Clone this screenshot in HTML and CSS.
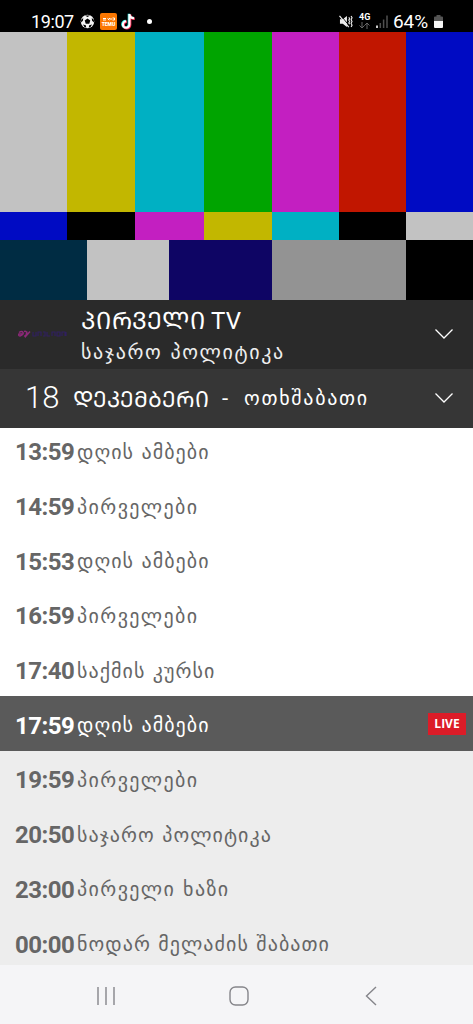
FILE: index.html
```html
<!DOCTYPE html>
<html lang="ka">
<head>
<meta charset="utf-8">
<title>პირველი TV</title>
<link rel="stylesheet" href="styles.css">
</head>
<body>
<div class="screen">
  <header class="status">
    <span class="clock">19:07</span>
    <svg class="ball" viewBox="0 0 16 16"><circle cx="8" cy="8" r="7.2" fill="#f4f4f4"/><g fill="#000"><path d="M8 4.800l3 2.200-1.100 3.500H6.100L5 7z"/><path d="M5.300 1.500h5.400L8 3.300zM1.200 6l2.300-1.800-.4 3L1.100 9zM14.800 6l-2.300-1.800.4 3L14.900 9zM3.200 11.300l3 .6.500 2.700-2.200-.9zM12.800 11.300l-3 .6-.5 2.700 2.200-.9z"/></g></svg>
    <span class="temu"><svg viewBox="0 0 17 17"><path d="M3 5.500h3M3 7h3M7.500 5.500l2 1.500M8 7l2-2M11 5v2M12.500 5h2v2h-2" stroke="#fff" stroke-width="1" fill="none"/></svg><b>TEMU</b></span>
    <svg class="tiktok" viewBox="0 0 16 18"><g fill="none" stroke-width="2.700"><path d="M9 1v11.200a3.500 3.500 0 1 1-3.500-3.500M9 1.500c.5 2.500 2.200 4 5 4" stroke="#25f4ee" transform="translate(-.5 -.3)"/><path d="M9 1v11.200a3.500 3.500 0 1 1-3.500-3.500M9 1.500c.5 2.500 2.200 4 5 4" stroke="#fe2c55" transform="translate(.7 .5)"/><path d="M9 1v11.200a3.500 3.500 0 1 1-3.500-3.500M9 1.500c.5 2.500 2.200 4 5 4" stroke="#fff" stroke-width="2.200"/></g></svg>
    <i class="dot"></i>
    <svg class="mute" viewBox="0 0 15 14"><path d="M1 4.500h3L8.500 1v12L4 9.500H1z" fill="#eee"/><path d="M1.500 0l9 11" stroke="#000" stroke-width="1"/><path d="M.5 1l10 12" stroke="#eee" stroke-width="1.300"/><path d="M10.500 2.500l1 1.500-1 1.500 1 1.500-1 1.500 1 1.500M13 1l1 2-1 2 1 2-1 2 1 2-1 2" stroke="#eee" stroke-width="1.200" fill="none"/></svg>
    <span class="net">4G<svg viewBox="0 0 11 7"><path d="M3 0v6M.5 3.500L3 6l2.500-2.500M8 7V1M5.500 3.500L8 1l2.500 2.500" fill="none" stroke="#666"/></svg></span>
    <svg class="signal" viewBox="0 0 12 13"><path d="M1 10.500V13" stroke="#fff" stroke-width="1.600"/><path d="M4.300 8v5M7.600 4.500V13M11 .5V13" stroke="#505050" stroke-width="1.500"/></svg>
    <span class="percent">64%</span>
    <svg class="battery" viewBox="0 0 9 13"><path d="M2.500 0h4v1.500H8a1 1 0 0 1 1 1V6H0V2.500a1 1 0 0 1 1-1h1.500z" fill="#555"/><path d="M0 6h9v6a1 1 0 0 1-1 1H1a1 1 0 0 1-1-1z" fill="#f5f5f5"/></svg>
  </header>

  <section class="video">
    <div class="bars tall"><i class="silver"></i><i class="yellow"></i><i class="cyan"></i><i class="green"></i><i class="magenta"></i><i class="red"></i><i class="blue"></i></div>
    <div class="bars short"><i class="blue"></i><i class="black"></i><i class="magenta"></i><i class="yellow"></i><i class="cyan"></i><i class="black"></i><i class="silver"></i></div>
    <div class="bars base"><i class="navy"></i><i class="silver"></i><i class="indigo"></i><i class="gray"></i><i class="black"></i></div>
  </section>

  <section class="channel">
    <svg class="logo" viewBox="0 0 50 8"><path d="M1 2.500q3-2 4 0T2 6q-2-.5-1-2h4M6 1.500q3-1 2.500 2T6 6M9 1.500L8 6l4-4.500" fill="none" stroke="#8c2878" stroke-width="1.500"/><path d="M15 2v4h3V2M20 6V2h3v4M25 2h2v4h-2M29 2v4h3M34 6V2h3v4M39 2h3v4h-3zM44 6V2h3v4M48 2v4" fill="none" stroke="#30205f" stroke-width="1.200"/></svg>
    <div class="names"><div class="title">ᲞᲘᲠᲕᲔᲚᲘ TV</div><div class="subtitle">საჯარო პოლიტიკა</div></div>
    <svg class="chevron" viewBox="0 0 20 12"><path d="M1.500 1.500L10 10l8.500-8.500"/></svg>
  </section>

  <section class="date">
    <span class="day">18</span><span class="month">ᲓᲔᲙᲔᲛᲑᲔᲠᲘ</span><span class="dash">-</span><span class="weekday">ოთხშაბათი</span>
    <svg class="chevron" viewBox="0 0 20 12"><path d="M1.500 1.500L10 10l8.500-8.500"/></svg>
  </section>

  <main class="list">
    <div class="row"><b>13:59</b><span>დღის ამბები</span></div>
    <div class="row"><b>14:59</b><span class="wide">პირველები</span></div>
    <div class="row"><b>15:53</b><span>დღის ამბები</span></div>
    <div class="row"><b>16:59</b><span class="wide">პირველები</span></div>
    <div class="row"><b>17:40</b><span>საქმის კურსი</span></div>
    <div class="row live"><b>17:59</b><span>დღის ამბები</span><em>LIVE</em></div>
    <div class="row next"><b>19:59</b><span class="wide">პირველები</span></div>
    <div class="row next"><b>20:50</b><span>საჯარო პოლიტიკა</span></div>
    <div class="row next"><b>23:00</b><span class="wide">პირველი ხაზი</span></div>
    <div class="row next"><b>00:00</b><span>ნოდარ მელაძის შაბათი</span></div>
  </main>

  <nav class="nav">
    <svg class="recent" viewBox="0 0 20 20"><path d="M2 1v18M10 1v18M18 1v18"/></svg>
    <svg class="home" viewBox="0 0 20 20"><rect x="1" y="1" width="18" height="18" rx="5.500"/></svg>
    <svg class="back" viewBox="0 0 12 20"><path d="M11 1L1.500 10l9.500 9"/></svg>
  </nav>
</div>
</body>
</html>
```
FILE: styles.css
```css
* { box-sizing: border-box; }
body { margin: 0; font-family: Roboto, "DejaVu Sans", sans-serif; }
svg { display: block; flex: none; }
.screen { width: 473px; height: 1024px; display: flex; flex-direction: column; overflow: hidden; }

.status { height: 32px; flex: none; background: #000; color: #fff; display: flex; align-items: center; padding: 10px 30px 0 31px; }
.clock { font-size: 18px; width: 42px; letter-spacing: -.4px; margin-right: 7px; }
.ball { width: 15px; height: 15px; margin-right: 5px; }
.temu { width: 17px; height: 17px; border-radius: 2px; background: #fb7701; color: #fff; display: flex; flex-direction: column; align-items: center; overflow: hidden; margin-right: 4px; }
.temu svg { width: 17px; height: 17px; margin-bottom: -9px; }
.temu b { font: 900 5px/6px Roboto, sans-serif; }
.tiktok { width: 15px; height: 17px; margin-right: 11px; }
.dot { width: 5px; height: 5px; border-radius: 50%; background: #fff; }
.mute { width: 14px; height: 13px; margin-left: auto; margin-right: 6px; }
.net { font: 700 9px/8px Roboto, sans-serif; width: 12px; margin-right: 5px; }
.net svg { width: 11px; height: 7px; margin-top: 1px; }
.signal { width: 12px; height: 13px; margin-right: 6px; }
.percent { font-size: 19px; width: 37px; letter-spacing: -.1px; margin-right: 3px; transform: translateX(-1px); }
.battery { width: 9px; height: 13px; }

.video { height: 267.500px; flex: none; display: flex; flex-direction: column; }
.bars { display: grid; }
.bars.tall, .bars.short { grid-template-columns: 66.500px 68.500px 69px 67.500px 67px 67.500px 67px; }
.bars.tall { height: 180px; }
.bars.short { height: 28px; }
.bars.base { flex: 1; grid-template-columns: 87px 82px 102.500px 134.500px 67px; }
.silver { background: #c2c2c2; }
.yellow { background: #c2b700; }
.cyan { background: #00b0c3; }
.green { background: #00a400; }
.magenta { background: #c31fc1; }
.red { background: #c11600; }
.blue { background: #000bc3; }
.black { background: #000; }
.navy { background: #002c43; }
.indigo { background: #0e0564; }
.gray { background: #939393; }

.channel { height: 69px; flex: none; background: #2a2a2a; color: #fff; display: flex; align-items: center; padding: 0 19px 0 18px; }
.logo { width: 50px; height: 8px; margin-right: 13px; }
.names { flex: 1; white-space: nowrap; padding-top: 4px; }
.title { font-size: 24px; line-height: 33px; letter-spacing: .25px; }
.subtitle { font-family: "DejaVu Sans", sans-serif; font-size: 20px; line-height: 29px; letter-spacing: 1.650px; color: #eee; }
.chevron { width: 20px; height: 12px; fill: none; stroke: #fff; stroke-width: 1.300; }

.date { height: 59px; flex: none; background: #363636; color: #fff; display: flex; align-items: center; padding: 0 19px 0 25px; white-space: nowrap; }
.day { font-size: 31px; font-weight: 300; width: 48px; transform: translateY(-1px); }
.month { font-size: 22px; width: 149px; }
.dash { font-size: 22px; width: 22px; }
.weekday { font-family: "DejaVu Sans", sans-serif; font-size: 20px; letter-spacing: 1.700px; }
.date .chevron { margin-left: auto; }

.list { height: 537px; flex: none; background: #fff; overflow: hidden; display: flex; flex-direction: column; }
.row { height: 54.700px; flex: none; display: flex; align-items: center; padding: 4px 7px 0 15px; color: #666; white-space: nowrap; }
.row:first-child { margin-top: -4.500px; }
.row b { font-size: 24px; width: 62px; letter-spacing: -.5px; }
.row span { font-family: "DejaVu Sans", sans-serif; font-size: 20px; letter-spacing: 1.050px; margin-top: -1px; }
.row span.wide { letter-spacing: 1.400px; }
.row.live { background: #5a5a5a; color: #fff; }
.row.next { background: #ededed; }
.row em { margin: -4px 0 0 auto; width: 38px; height: 22px; background: #dc1c28; font: 700 12px/22px "Open Sans", sans-serif; text-align: center; }

.nav { flex: 1; background: #f5f5f7; display: flex; align-items: center; padding: 4px 96px 0; }
.nav svg { fill: none; stroke: #85858a; stroke-width: 1.400; height: 20px; }
.recent, .home { width: 20px; }
.home { margin: 0 auto 0 113px; }
.back { width: 12px; }
```
